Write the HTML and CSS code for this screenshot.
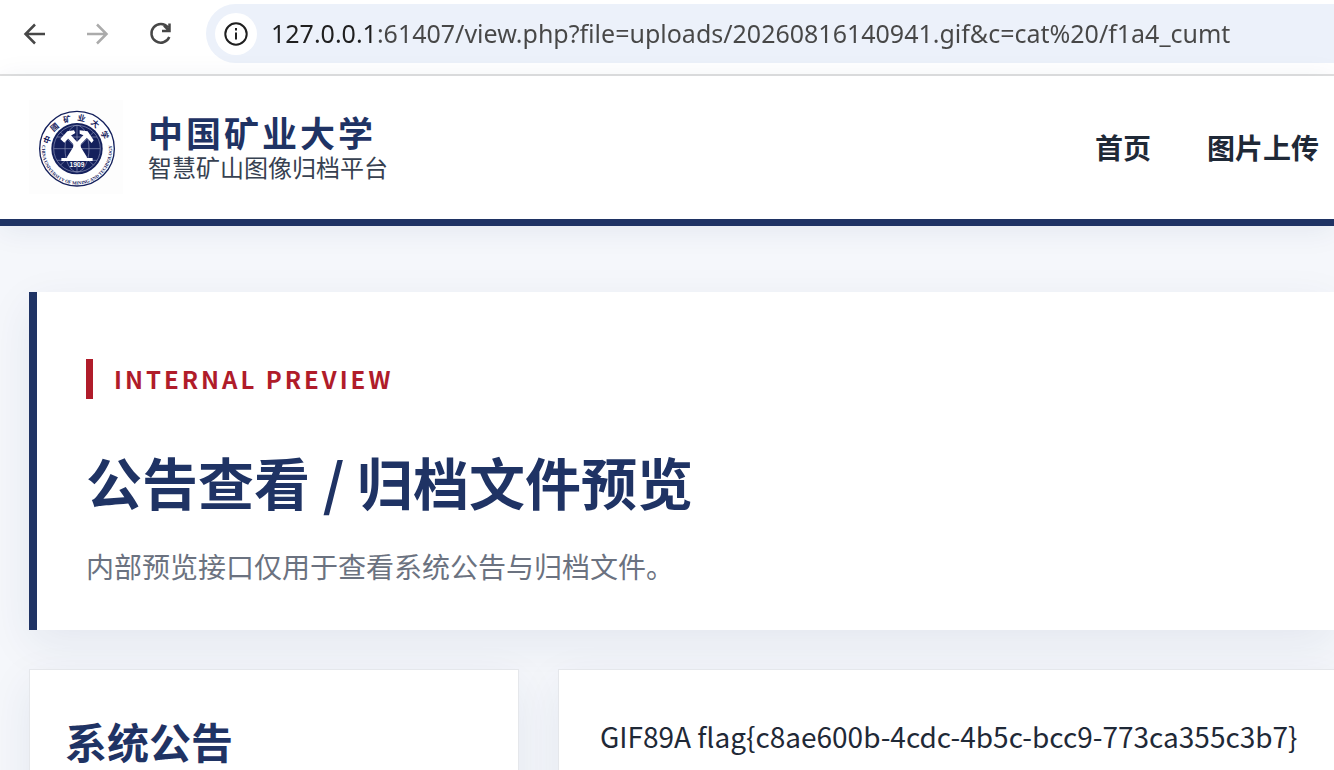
FILE: index.html
```html
<!DOCTYPE html>
<html lang="zh-CN">

<head>
  <meta charset="UTF-8">
  <meta name="viewport" content="width=device-width, initial-scale=1.0">
  <title>公告查看 / 归档文件预览</title>
  <link rel="stylesheet" href="styles.css">
</head>

<body>
  <div class="toolbar">
    <button class="tool" type="button" aria-label="Back">
      <svg viewBox="0 0 24 24"><path d="M22 12H3M12 2.500 2.500 12l9.500 9.500"/></svg>
    </button>
    <button class="tool" type="button" aria-label="Forward" disabled>
      <svg viewBox="0 0 24 24"><path d="M1 12h19M11 2.500 20.500 12 11 21.500"/></svg>
    </button>
    <button class="tool" type="button" aria-label="Reload">
      <svg viewBox="0 0 24 24"><path d="M19 5.500A9.300 9.300 0 1 0 20.300 15M20.500 1.500v7.500H13M20 8.500l-5-5"/></svg>
    </button>
    <div class="address">
      <button class="site-info" type="button" aria-label="Site information">
        <svg viewBox="0 0 24 24"><circle cx="12" cy="12" r="10.700"/><path d="M12 10.500v7M12 6v2.500"/></svg>
      </button>
      <input class="url" type="text" aria-label="Address" spellcheck="false" value="127.0.0.1:61407/view.php?file=uploads/20260816140941.gif&amp;c=cat%20/f1a4_cumt">
    </div>
  </div>

  <header class="site-header">
    <a class="brand" href="#">
      <svg class="seal" viewBox="27 15 282 282" aria-hidden="true">
        <defs>
          <path id="arc-top" d="M87 161a84 84 0 0 1 168 0"/>
          <path id="arc-bottom" d="M68 143A105 105 0 1 0 274 143"/>
        </defs>
        <circle class="ring" cx="171" cy="161" r="112"/>
        <circle class="disc" cx="171" cy="161" r="77"/>
        <g class="globe">
          <circle cx="171" cy="161" r="70"/>
          <ellipse cx="171" cy="161" rx="36" ry="70"/>
          <path d="M101 161h140M171 91v140M111 126h120M111 196h120M121 111l100 100M221 111 121 211"/>
        </g>
        <g class="tools">
          <path class="handle" d="M144 121 171 150l25 41M199 121l-28 29-25 41"/>
          <path d="M121 132 142 109l20-3 4 8-14 8-19 21zM179 106l24 3 18 27-6 8-19-21-17-7z"/>
          <path d="M160 142h22v30l15 19h-52l15-19zM124 189h94v9h-94z"/>
        </g>
        <text class="year" x="171" y="215">1909</text>
        <text class="seal-cn"><textPath href="#arc-top" startOffset="50%">中國矿业大学</textPath></text>
        <text class="seal-en"><textPath href="#arc-bottom" startOffset="50%">CHINA UNIVERSITY OF MINING AND TECHNOLOGY</textPath></text>
      </svg>
      <span class="brand-text">
        <strong>中国矿业大学</strong>
        <span>智慧矿山图像归档平台</span>
      </span>
    </a>
    <nav class="nav">
      <a href="#">首页</a>
      <a href="#">图片上传</a>
    </nav>
  </header>

  <main class="page">
    <section class="hero">
      <p class="eyebrow">INTERNAL PREVIEW</p>
      <h1>公告查看 / 归档文件预览</h1>
      <p class="desc">内部预览接口仅用于查看系统公告与归档文件。</p>
    </section>

    <div class="grid">
      <aside class="card notice">
        <h2>系统公告</h2>
      </aside>
      <section class="card viewer">
        <pre>GIF89A flag{c8ae600b-4cdc-4b5c-bcc9-773ca355c3b7}</pre>
      </section>
    </div>
  </main>
</body>

</html>
```
FILE: styles.css
```css
* {
  box-sizing: border-box;
}

body {
  margin: 0;
  color: #1f2937;
  background-color: #f5f7fb;
  font-family: "Noto Sans CJK SC", "Noto Sans", sans-serif;
}

button {
  padding: 0;
  border: none;
  background-color: transparent;
  cursor: pointer;
}

a {
  color: inherit;
  text-decoration: none;
}

/* browser bar */
.toolbar {
  display: flex;
  align-items: center;
  gap: 39px;
  height: 76px;
  padding: 4px 0 11px 23px;
  border-bottom: 2px solid #e0e0e0;
  background-color: #fff;
}

.tool,
.site-info {
  display: flex;
  align-items: center;
  justify-content: center;
}

.toolbar svg {
  width: 24px;
  height: 24px;
  fill: none;
  stroke: #474747;
  stroke-width: 2.5;
}

.tool:disabled svg {
  stroke: #ababab;
}

.address {
  display: flex;
  align-items: center;
  gap: 14px;
  flex: 1;
  height: 59px;
  margin-left: -6px;
  padding-left: 9px;
  border-radius: 30px 0 0 30px;
  background-color: #ecf1fa;
}

.toolbar .site-info {
  width: 42px;
  height: 42px;
  border-radius: 50%;
  background-color: #fff;
}

.toolbar .site-info svg {
  stroke: #1f1f1f;
  stroke-width: 2;
}

/* host part is darker than the path */
.url {
  flex: 1;
  min-width: 0;
  padding: 0 0 2px;
  border: none;
  outline: none;
  color: transparent;
  background: linear-gradient(90deg, #1f1f1f 103px, #474747 103px);
  -webkit-background-clip: text;
  background-clip: text;
  font-family: "Noto Sans", "Open Sans", sans-serif;
  font-size: 25px;
  line-height: 36px;
}

/* site header */
.site-header {
  position: relative;
  display: flex;
  align-items: center;
  justify-content: space-between;
  padding: 24px 15px 25px 29px;
  border-bottom: 7px solid #1f3364;
  background-color: #fff;
  box-shadow: 0 4px 28px rgba(31, 51, 100, .08);
}

.brand {
  display: flex;
  align-items: center;
  gap: 25px;
}

.seal {
  width: 94px;
  height: 94px;
  background-color: #fdfdfd;
}

.seal .ring {
  fill: #fff;
  stroke: #14205c;
  stroke-width: 4;
}

.seal .disc {
  fill: #14205c;
}

.seal .globe {
  fill: none;
  stroke: #8e96ba;
  stroke-width: 2;
}

.seal .tools {
  fill: #fff;
}

.seal .handle {
  fill: none;
  stroke: #fff;
  stroke-width: 13;
}

.seal text {
  fill: #14205c;
  text-anchor: middle;
}

.seal .year {
  fill: #fff;
  font: bold 20px "Liberation Sans", sans-serif;
}

.seal .seal-cn {
  font-size: 24px;
  font-weight: bold;
  letter-spacing: 16px;
}

.seal .seal-en {
  font: bold 14px "Liberation Serif", serif;
}

.brand-text {
  display: flex;
  flex-direction: column;
  padding-top: 3px;
  color: #374151;
  font-size: 24px;
  line-height: 35px;
}

.brand-text strong {
  color: #1f3364;
  font-size: 35px;
  letter-spacing: 3px;
}

.nav {
  display: flex;
  gap: 56px;
  font-size: 28px;
  font-weight: bold;
}

/* content */
.page {
  height: calc(100vh - 226px);
  padding: 66px 0 0 29px;
  overflow: hidden;
}

.hero {
  padding: 67px 49px 44px;
  border-left: 8px solid #1f3364;
  background-color: #fff;
  box-shadow: 0 14px 42px rgba(31, 51, 100, .08);
}

.eyebrow {
  margin: 0;
  padding-left: 21px;
  border-left: 7px solid #b01c2a;
  color: #b01c2a;
  font-size: 24px;
  font-weight: bold;
  line-height: 40px;
  letter-spacing: 3px;
}

.hero h1 {
  margin: 45px 0 28px;
  color: #1f3364;
  font-size: 56px;
  line-height: 74px;
}

.desc {
  margin: 0;
  color: #6b7280;
  font-size: 28px;
  line-height: 40px;
}

.grid {
  display: grid;
  grid-template-columns: 490px 1fr;
  gap: 39px;
  margin-top: 39px;
}

.card {
  min-height: 280px;
  border: 1px solid #e5e7eb;
  background-color: #fff;
  box-shadow: 0 14px 42px rgba(31, 51, 100, .08);
}

.notice {
  padding: 35px;
}

.notice h2 {
  margin: 0;
  color: #1f3364;
  font-size: 42px;
  line-height: 72px;
}

.viewer {
  padding: 41px;
}

.viewer pre {
  margin: 0;
  font-family: inherit;
  font-size: 28px;
  line-height: 50px;
}
```
